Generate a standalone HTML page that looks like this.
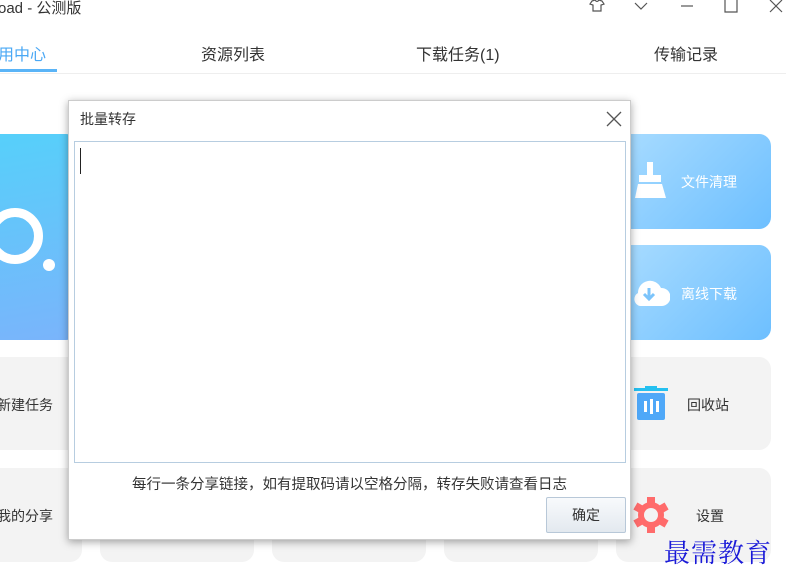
<!DOCTYPE html>
<html><head><meta charset="utf-8"><style>
*{margin:0;padding:0;box-sizing:border-box}
body{width:786px;height:582px;background:#fff;position:relative;overflow:hidden;font-family:"Liberation Sans","Noto Sans CJK SC",sans-serif;color:#333}
.a{position:absolute}
.t{font-size:14px;white-space:nowrap}
.tile{position:absolute;border-radius:12px;background:#f3f3f3}
.blue{background:linear-gradient(135deg,#a9dcff,#6dbfff)}
</style></head><body>
<div class="a t" style="left:-2px;top:-3px;font-size:15px;color:#333">oad - 公测版</div>
<svg class="a" style="left:585px;top:0" width="201" height="14" fill="none" stroke="#555" stroke-width="1.2">
<path d="M7 1 L10 0 Q12 3 14 0 L17 1 L19 4 L16 5 L16 11 L8 11 L8 5 L5 4 Z"/>
<path d="M50 3 L56 9 L62 3"/>
<path d="M96 6 H108"/>
<path d="M140 0 V12 H152 V0"/>
<path d="M185 0 L197 12 M197 0 L185 12"/>
</svg>
<div class="a t" style="left:-2px;top:41px;font-size:16px;color:#4aa8f5">用中心</div>
<div class="a" style="left:0;top:69px;width:57px;height:3px;background:#5ab4f7"></div>
<div class="a t" style="left:201px;top:41px;font-size:16px">资源列表</div>
<div class="a t" style="left:416px;top:41px;font-size:16px">下载任务(1)</div>
<div class="a t" style="left:654px;top:41px;font-size:16px">传输记录</div>
<div class="a" style="left:0;top:73px;width:786px;height:1px;background:#eee"></div>

<div class="tile" style="left:-12px;top:134px;width:90px;height:206px;background:linear-gradient(170deg,#56d0fa,#7ab4fb)"></div>
<div class="a" style="left:-13px;top:208px;width:56px;height:56px;border:9px solid #fff;border-radius:50%"></div>
<div class="a" style="left:43px;top:259px;width:12px;height:12px;background:#fff;border-radius:50%"></div>
<div class="tile" style="left:-12px;top:357px;width:94px;height:93px"></div>
<div class="tile" style="left:-12px;top:468px;width:94px;height:94px"></div>
<div class="a t" style="left:-3px;top:395px">新建任务</div>
<div class="a t" style="left:-3px;top:506px">我的分享</div>
<div class="tile" style="left:100px;top:468px;width:154px;height:94px"></div>
<div class="tile" style="left:272px;top:468px;width:154px;height:94px"></div>
<div class="tile" style="left:444px;top:468px;width:154px;height:94px"></div>

<div class="tile blue" style="left:616px;top:134px;width:155px;height:95px"></div>
<div class="tile blue" style="left:616px;top:245px;width:155px;height:95px"></div>
<div class="tile" style="left:616px;top:357px;width:155px;height:93px"></div>
<div class="tile" style="left:616px;top:468px;width:155px;height:94px"></div>
<svg class="a" style="left:634px;top:162px" width="34" height="38"><rect x="13" y="0" width="6" height="14" fill="#fff"/><rect x="5" y="13" width="22" height="7" fill="#fff"/><path d="M4 22 H28 L32 36 H1 Z" fill="#fff"/></svg>
<div class="a t" style="left:681px;top:172px;color:#fff">文件清理</div>
<svg class="a" style="left:632px;top:276px" width="38" height="32"><path d="M8 30 A7 7 0 0 1 6 17 A12 12 0 0 1 29 12 A9 9 0 0 1 30 30 Z" fill="#fff"/><path d="M17 12 V22 M12 18 L17 23 L22 18" stroke="#7cc4fb" stroke-width="3" fill="none"/></svg>
<div class="a t" style="left:681px;top:284px;color:#fff">离线下载</div>
<svg class="a" style="left:634px;top:386px" width="34" height="36"><rect x="0" y="2" width="34" height="3" fill="#25c0f0"/><rect x="11" y="0" width="12" height="3" fill="#25c0f0"/><rect x="3" y="7" width="28" height="27" rx="2" fill="#4fa8f8"/><rect x="10" y="15" width="3" height="11" fill="#fff"/><rect x="16" y="13" width="3" height="15" fill="#fff"/><rect x="22" y="15" width="3" height="11" fill="#fff"/></svg>
<div class="a t" style="left:687px;top:395px">回收站</div>
<svg class="a" style="left:633px;top:497px" width="36" height="36" viewBox="-18 -18 36 36"><g fill="#ff6b6b"><circle r="13"/><rect x="-4" y="-18" width="8" height="36"/><rect x="-4" y="-18" width="8" height="36" transform="rotate(60)"/><rect x="-4" y="-18" width="8" height="36" transform="rotate(120)"/></g><circle r="7" fill="#f3f3f3"/></svg>
<div class="a t" style="left:696px;top:506px">设置</div>
<div class="a" style="left:664px;top:533px;font-family:'Noto Serif CJK SC',serif;font-size:26px;color:#1a1ad8;letter-spacing:1px;white-space:nowrap">最需教育</div>

<div class="a" style="left:68px;top:100px;width:563px;height:440px;background:#fff;box-shadow:0 2px 8px rgba(0,0,0,.35);border:1px solid #ccc">
<div class="a t" style="left:11px;top:8px">批量转存</div>
<svg class="a" style="left:537px;top:10px" width="16" height="16" stroke="#555" stroke-width="1.3"><path d="M1 1 L15 15 M15 1 L1 15"/></svg>
<div class="a" style="left:5px;top:40px;width:552px;height:322px;border:1px solid #b7cde0"></div>
<div class="a" style="left:11px;top:47px;width:1px;height:26px;background:#222"></div>
<div class="a t" style="left:0;top:372px;width:561px;text-align:center;font-size:14.5px">每行一条分享链接，如有提取码请以空格分隔，转存失败请查看日志</div>
<div class="a t" style="left:477px;top:396px;width:80px;height:36px;border:1px solid #b8c8d8;border-radius:2px;background:linear-gradient(#f8fafc,#e3e9ef);text-align:center;line-height:34px;font-size:14px">确定</div>
</div>
</body></html>
